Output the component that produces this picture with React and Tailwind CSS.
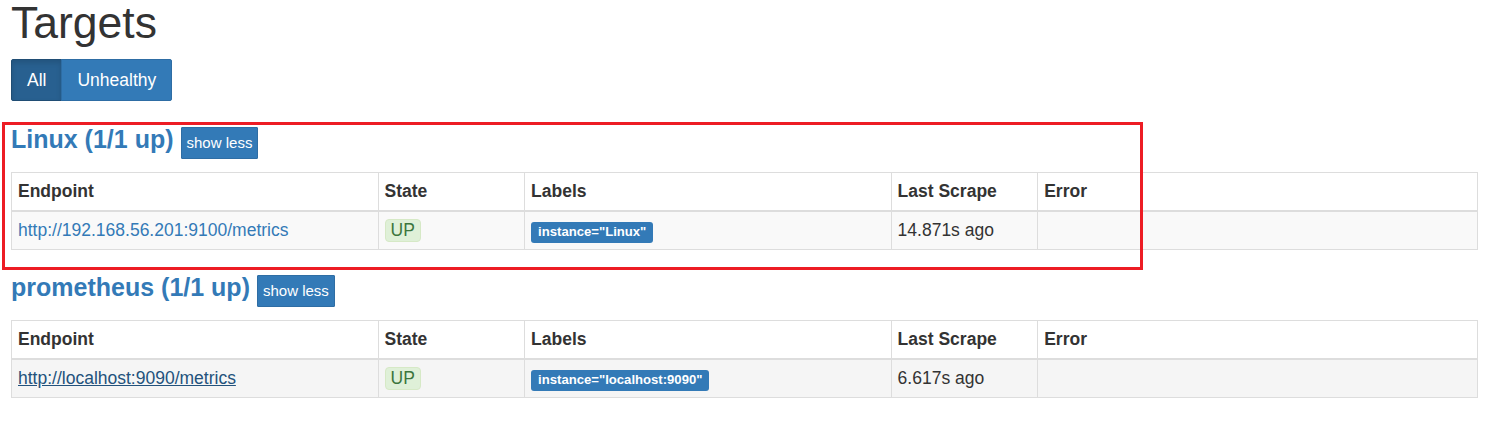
import React from 'react';

const jobs = [
  {
    name: 'Linux',
    up: '1/1 up',
    endpoint: 'http://192.168.56.201:9100/metrics',
    label: 'instance="Linux"',
    lastScrape: '14.871s ago',
    rowBg: 'bg-[#f9f9f9]',
    linkClass: 'text-[#337ab7]',
  },
  {
    name: 'prometheus',
    up: '1/1 up',
    endpoint: 'http://localhost:9090/metrics',
    label: 'instance="localhost:9090"',
    lastScrape: '6.617s ago',
    rowBg: 'bg-[#f5f5f5]',
    linkClass: 'text-[#23527c] underline',
  },
];

function TargetTable({ job }) {
  return (
    <table className="mt-[13px] w-full table-fixed border-collapse border border-[#ddd] text-[17.5px] leading-[25px] text-[#333]">
      <colgroup>
        <col className="w-[25%]" />
        <col className="w-[10%]" />
        <col className="w-[25%]" />
        <col className="w-[10%]" />
        <col />
      </colgroup>
      <thead>
        <tr>
          <th className="border border-[#ddd] border-b-2 px-[6px] py-[6px] text-left font-bold">Endpoint</th>
          <th className="border border-[#ddd] border-b-2 px-[6px] py-[6px] text-left font-bold">State</th>
          <th className="border border-[#ddd] border-b-2 px-[6px] py-[6px] text-left font-bold">Labels</th>
          <th className="border border-[#ddd] border-b-2 px-[6px] py-[6px] text-left font-bold">Last Scrape</th>
          <th className="border border-[#ddd] border-b-2 px-[6px] py-[6px] text-left font-bold">Error</th>
        </tr>
      </thead>
      <tbody>
        <tr className={job.rowBg}>
          <td className="border border-[#ddd] px-[6px] py-[6px]">
            <a href="#" className={job.linkClass}>{job.endpoint}</a>
          </td>
          <td className="border border-[#ddd] px-[6px] py-[6px]">
            <span className="inline-block rounded-[4px] border border-[#d6e9c6] bg-[#dff0d8] px-[5px] py-[1px] leading-[19px] text-[#3c763d]">
              UP
            </span>
          </td>
          <td className="border border-[#ddd] px-[6px] py-[6px]">
            <span className="inline-block rounded-[3px] bg-[#337ab7] px-[7px] pt-[2.5px] pb-[3.5px] text-[13.125px] font-bold leading-[15px] text-white">
              {job.label}
            </span>
          </td>
          <td className="border border-[#ddd] px-[6px] py-[6px]">{job.lastScrape}</td>
          <td className="border border-[#ddd] px-[6px] py-[6px]"></td>
        </tr>
      </tbody>
    </table>
  );
}

export default function App() {
  return (
    <div
      className="relative min-h-[438px] bg-white pl-[11px] pr-[7px] text-[#333]"
      style={{ fontFamily: '"Liberation Sans", Arial, sans-serif' }}
    >
      <h1 className="m-0 text-[44.5px] font-normal leading-[46px]">Targets</h1>

      <div className="mt-[13px] flex">
        <button className="h-[42px] rounded-l-[2px] border border-[#204d74] bg-[#286090] px-[15px] text-[17.5px] leading-[25px] text-white shadow-[inset_0_3px_5px_rgba(0,0,0,0.125)]">
          All
        </button>
        <button className="-ml-px h-[42px] rounded-r-[2px] border border-[#2e6da4] bg-[#337ab7] px-[15px] text-[17.5px] leading-[25px] text-white">
          Unhealthy
        </button>
      </div>

      {jobs.map((job, i) => (
        <div key={job.name} className={i === 0 ? 'mt-[23px]' : 'mt-[22px]'}>
          <h2 className="flex items-baseline gap-[7px]">
            <a href="#" className="text-[25px] font-bold leading-[30px] text-[#337ab7]">
              {job.name} ({job.up})
            </a>
            <button className="rounded-[1px] border border-[#2e6da4] bg-[#337ab7] px-[5px] py-[4px] text-[15px] leading-[22px] text-white">
              show less
            </button>
          </h2>
          <TargetTable job={job} />
        </div>
      ))}

      {/* red highlight box drawn over the first job */}
      <div className="pointer-events-none absolute left-[2px] top-[122px] h-[148px] w-[1141px] border-[3px] border-[#ed1c24]" />
    </div>
  );
}
